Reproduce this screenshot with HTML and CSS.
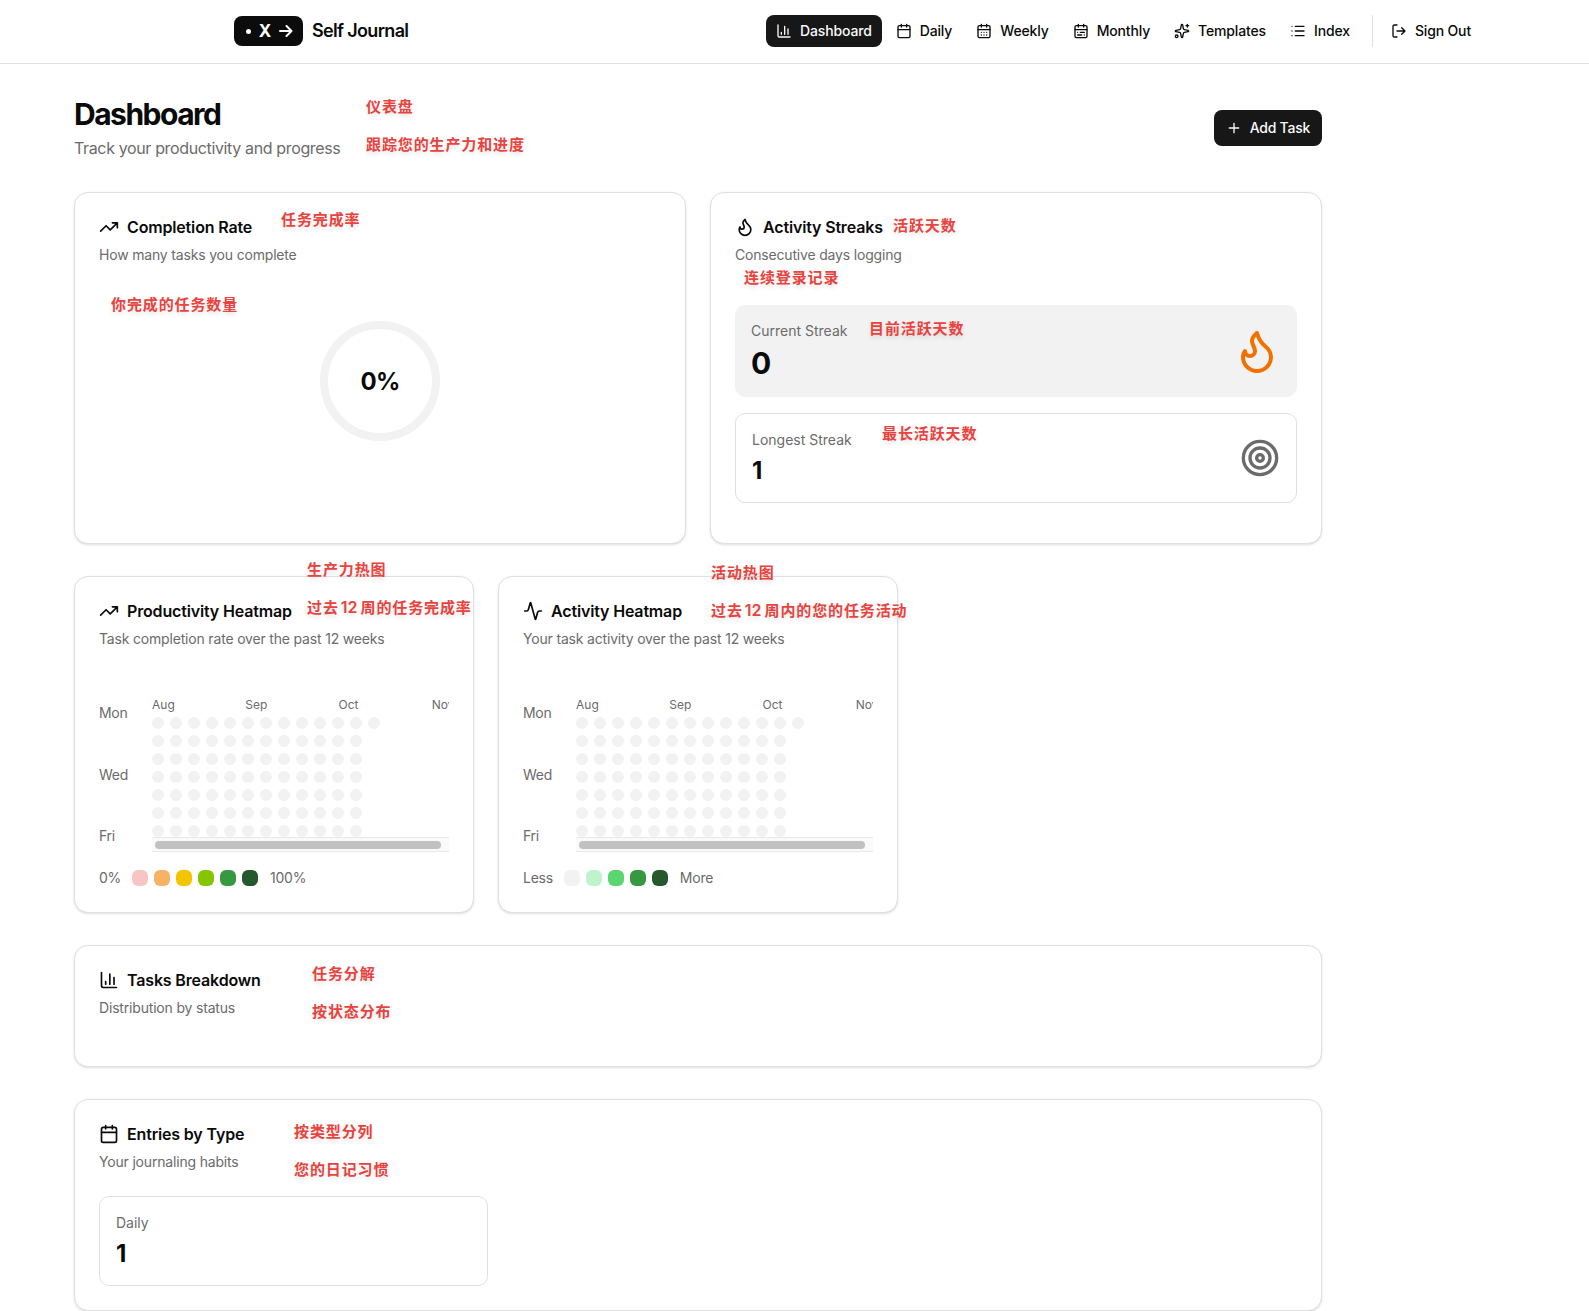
FILE: index.html
```html
<!DOCTYPE html>
<html lang="en">
<head>
    <meta charset="UTF-8">
    <meta name="viewport" content="width=device-width, initial-scale=1.0">
    <title>Self Journal</title>
    <link rel="stylesheet" href="styles.css">
</head>
<body>
    <!-- Icon sprite -->
    <svg class="sprite" width="0" height="0">
        <symbol id="chart" viewBox="0 0 24 24"><path d="M3 3v16a2 2 0 0 0 2 2h16M18 17V9M13 17V5M8 17v-3"/></symbol>
        <symbol id="calendar" viewBox="0 0 24 24"><path d="M8 2v4M16 2v4M3 10h18"/><rect width="18" height="18" x="3" y="4" rx="2"/></symbol>
        <symbol id="calendar-days" viewBox="0 0 24 24"><path d="M8 2v4M16 2v4M3 10h18M8 14h.01M12 14h.01M16 14h.01M8 18h.01M12 18h.01M16 18h.01"/><rect width="18" height="18" x="3" y="4" rx="2"/></symbol>
        <symbol id="calendar-range" viewBox="0 0 24 24"><path d="M8 2v4M16 2v4M3 10h18M17 14h-6M13 18H7M7 14h.01M17 18h.01"/><rect width="18" height="18" x="3" y="4" rx="2"/></symbol>
        <symbol id="sparkles" viewBox="0 0 24 24"><path d="M11.017 2.814a1 1 0 0 1 1.966 0l1.051 5.558a2 2 0 0 0 1.594 1.594l5.558 1.051a1 1 0 0 1 0 1.966l-5.558 1.051a2 2 0 0 0-1.594 1.594l-1.051 5.558a1 1 0 0 1-1.966 0l-1.051-5.558a2 2 0 0 0-1.594-1.594l-5.558-1.051a1 1 0 0 1 0-1.966l5.558-1.051a2 2 0 0 0 1.594-1.594zM20 2v4M22 4h-4"/><circle cx="4" cy="20" r="2"/></symbol>
        <symbol id="list" viewBox="0 0 24 24"><path d="M3 5h.01M3 12h.01M3 19h.01M8 5h13M8 12h13M8 19h13"/></symbol>
        <symbol id="logout" viewBox="0 0 24 24"><path d="m16 17 5-5-5-5M21 12H9M9 21H5a2 2 0 0 1-2-2V5a2 2 0 0 1 2-2h4"/></symbol>
        <symbol id="plus" viewBox="0 0 24 24"><path d="M5 12h14M12 5v14"/></symbol>
        <symbol id="trending" viewBox="0 0 24 24"><path d="M16 7h6v6M22 7l-8.5 8.5-5-5L2 17"/></symbol>
        <symbol id="flame" viewBox="0 0 24 24"><path d="M12 3q1 4 4 6.5t3 5.5a1 1 0 0 1-14 0 5 5 0 0 1 1-3 1 1 0 0 0 5 0c0-2-1.5-3-1.5-5q0-2 2.5-4"/></symbol>
        <symbol id="target" viewBox="0 0 24 24"><circle cx="12" cy="12" r="10"/><circle cx="12" cy="12" r="6"/><circle cx="12" cy="12" r="2"/></symbol>
        <symbol id="activity" viewBox="0 0 24 24"><path d="M22 12h-2.48a2 2 0 0 0-1.93 1.46l-2.35 8.36a.25.25 0 0 1-.48 0L9.24 2.18a.25.25 0 0 0-.48 0l-2.35 8.36A2 2 0 0 1 4.49 12H2"/></symbol>
    </svg>

    <header class="topbar">
        <div class="brand">
            <div class="logo">
                <span class="logo-dot"></span>
                <span class="logo-x">X</span>
                <svg class="logo-arrow" viewBox="0 0 14 12"><path d="M1 6h11.5M7.5 1l5 5-5 5"/></svg>
            </div>
            <span class="brand-name">Self Journal</span>
        </div>
        <nav class="nav">
            <a class="nav-item active"><svg class="icon"><use href="#chart"/></svg><span>Dashboard</span></a>
            <a class="nav-item"><svg class="icon"><use href="#calendar"/></svg><span>Daily</span></a>
            <a class="nav-item"><svg class="icon"><use href="#calendar-days"/></svg><span>Weekly</span></a>
            <a class="nav-item"><svg class="icon"><use href="#calendar-range"/></svg><span>Monthly</span></a>
            <a class="nav-item"><svg class="icon"><use href="#sparkles"/></svg><span>Templates</span></a>
            <a class="nav-item"><svg class="icon"><use href="#list"/></svg><span>Index</span></a>
            <div class="nav-divider"></div>
            <a class="nav-item"><svg class="icon"><use href="#logout"/></svg><span>Sign Out</span></a>
        </nav>
    </header>

    <main class="page">
        <div class="page-head">
            <div>
                <h1>Dashboard</h1>
                <p class="subtitle">Track your productivity and progress</p>
            </div>
            <button class="add-btn"><svg class="icon"><use href="#plus"/></svg><span>Add Task</span></button>
        </div>

        <div class="row two-col">
            <section class="card">
                <h2 class="card-title"><svg class="icon"><use href="#trending"/></svg><span>Completion Rate</span></h2>
                <p class="card-desc">How many tasks you complete</p>
                <div class="ring-wrap">
                    <div class="ring">0%</div>
                </div>
            </section>
            <section class="card">
                <h2 class="card-title"><svg class="icon"><use href="#flame"/></svg><span>Activity Streaks</span></h2>
                <p class="card-desc">Consecutive days logging</p>
                <div class="streaks">
                    <div class="stat stat-current">
                        <div>
                            <div class="stat-label">Current Streak</div>
                            <div class="stat-value big">0</div>
                        </div>
                        <svg class="icon icon-flame"><use href="#flame"/></svg>
                    </div>
                    <div class="stat stat-outline">
                        <div>
                            <div class="stat-label">Longest Streak</div>
                            <div class="stat-value">1</div>
                        </div>
                        <svg class="icon icon-target"><use href="#target"/></svg>
                    </div>
                </div>
            </section>
        </div>

        <div class="row heatmaps">
            <section class="card">
                <h2 class="card-title"><svg class="icon"><use href="#trending"/></svg><span>Productivity Heatmap</span></h2>
                <p class="card-desc">Task completion rate over the past 12 weeks</p>
                <div class="heatmap">
                    <div class="days"><span>Mon</span><span>Wed</span><span>Fri</span></div>
                    <div class="scroller">
                        <div class="months"><span>Aug</span><span>Sep</span><span>Oct</span><span>Nov</span></div>
                        <div class="weeks"></div>
                        <div class="scrollbar"><div class="thumb"></div></div>
                    </div>
                </div>
                <div class="legend">
                    <span class="legend-low">0%</span>
                    <div class="swatches">
                        <i class="sw sw-red"></i><i class="sw sw-orange"></i><i class="sw sw-yellow"></i><i class="sw sw-lime"></i><i class="sw sw-green"></i><i class="sw sw-dark"></i>
                    </div>
                    <span>100%</span>
                </div>
            </section>
            <section class="card">
                <h2 class="card-title"><svg class="icon"><use href="#activity"/></svg><span>Activity Heatmap</span></h2>
                <p class="card-desc">Your task activity over the past 12 weeks</p>
                <div class="heatmap">
                    <div class="days"><span>Mon</span><span>Wed</span><span>Fri</span></div>
                    <div class="scroller">
                        <div class="months"><span>Aug</span><span>Sep</span><span>Oct</span><span>Nov</span></div>
                        <div class="weeks"></div>
                        <div class="scrollbar"><div class="thumb"></div></div>
                    </div>
                </div>
                <div class="legend">
                    <span class="legend-low">Less</span>
                    <div class="swatches">
                        <i class="sw sw-none"></i><i class="sw sw-mint"></i><i class="sw sw-bright"></i><i class="sw sw-green"></i><i class="sw sw-dark"></i>
                    </div>
                    <span>More</span>
                </div>
            </section>
        </div>

        <section class="card row breakdown">
            <h2 class="card-title"><svg class="icon"><use href="#chart"/></svg><span>Tasks Breakdown</span></h2>
            <p class="card-desc">Distribution by status</p>
        </section>

        <section class="card row">
            <h2 class="card-title"><svg class="icon"><use href="#calendar"/></svg><span>Entries by Type</span></h2>
            <p class="card-desc">Your journaling habits</p>
            <div class="entries">
                <div class="stat stat-outline">
                    <div>
                        <div class="stat-label">Daily</div>
                        <div class="stat-value">1</div>
                    </div>
                </div>
            </div>
        </section>
    </main>

    <!-- Translation notes floating over the page -->
    <div class="notes" lang="zh-CN">
        <div class="note n-head">仪表盘<br>跟踪您的生产力和进度</div>
        <div class="note n-rate">任务完成率</div>
        <div class="note n-count">你完成的任务数量</div>
        <div class="note n-streaks">活跃天数</div>
        <div class="note n-logging">连续登录记录</div>
        <div class="note n-current">目前活跃天数</div>
        <div class="note n-longest">最长活跃天数</div>
        <div class="note n-prod">生产力热图<br>过去<b>12</b>周的任务完成率</div>
        <div class="note n-act">活动热图<br>过去<b>12</b>周内的您的任务活动</div>
        <div class="note n-tasks">任务分解<br>按状态分布</div>
        <div class="note n-entries">按类型分列<br>您的日记习惯</div>
    </div>

    <script>
        // 12 full weeks plus the first day of the current one
        document.querySelectorAll('.weeks').forEach(grid => {
            for (let i = 0; i < 12 * 7 + 1; i++) {
                const day = document.createElement('span');
                day.className = 'day';
                grid.appendChild(day);
            }
        });
    </script>
</body>
</html>
```
FILE: styles.css
```css
* {
    box-sizing: border-box;
}

body {
    margin: 0;
    background: #fff;
    color: #0a0a0a;
    font-family: Inter, "Noto Sans CJK SC", sans-serif;
    font-size: 14px;
    line-height: 20px;
    position: relative;
}

h1, h2, p {
    margin: 0;
}

.sprite {
    position: absolute;
}

.icon {
    width: 16px;
    height: 16px;
    flex: none;
    fill: none;
    stroke: currentColor;
    stroke-width: 2;
    stroke-linecap: round;
    stroke-linejoin: round;
}

/* Top bar */
.topbar {
    height: 64px;
    padding: 0 108px 2px 234px;
    border-bottom: 1px solid #e0e0e0;
    display: flex;
    align-items: center;
    justify-content: space-between;
}

.brand {
    display: flex;
    align-items: center;
    gap: 9px;
}

.logo {
    width: 69px;
    height: 30px;
    padding: 0 10px 0 12px;
    border-radius: 8px;
    background: #0c0c0c;
    color: #fff;
    display: flex;
    align-items: center;
    justify-content: space-between;
}

.logo-dot {
    width: 5px;
    height: 5px;
    margin-top: 2px;
    border-radius: 50%;
    background: #fff;
}

.logo-x {
    font-size: 17px;
    font-weight: 700;
}

.logo-arrow {
    width: 14px;
    height: 12px;
    fill: none;
    stroke: #fff;
    stroke-width: 2;
    stroke-linecap: round;
    stroke-linejoin: round;
}

.brand-name {
    font-size: 18px;
    font-weight: 600;
    letter-spacing: -0.67px;
}

.nav {
    display: flex;
    align-items: center;
    gap: 4px;
}

.nav-item {
    height: 32px;
    padding: 0 10px;
    border-radius: 8px;
    display: flex;
    align-items: center;
    gap: 8px;
    font-weight: 500;
    letter-spacing: -0.15px;
}

.nav-item.active {
    background: #171717;
    color: #fafafa;
}

.nav-divider {
    width: 1px;
    height: 32px;
    margin: 0 4px 0 8px;
    background: #e0e0e0;
}

/* Page */
.page {
    width: 1248px;
    margin-left: 74px;
    padding-top: 32px;
}

.page-head {
    display: flex;
    align-items: center;
    justify-content: space-between;
}

h1 {
    font-size: 30px;
    line-height: 36px;
    font-weight: 700;
    letter-spacing: -1.5px;
}

.subtitle {
    margin-top: 4px;
    font-size: 16px;
    line-height: 24px;
    letter-spacing: -0.36px;
    color: #6b6b6b;
}

.add-btn {
    height: 36px;
    padding: 0 12px;
    border: 0;
    border-radius: 8px;
    background: #171717;
    color: #fafafa;
    display: flex;
    align-items: center;
    gap: 8px;
    font: 500 14px/20px Inter, sans-serif;
    letter-spacing: -0.25px;
}

.row {
    margin-top: 32px;
}

.two-col {
    display: grid;
    grid-template-columns: 1fr 1fr;
    gap: 24px;
}

.card {
    padding: 24px;
    border: 1px solid #e0e0e0;
    border-radius: 14px;
    background: #fff;
    box-shadow: 0 1px 3px rgba(0, 0, 0, 0.1), 0 1px 2px -1px rgba(0, 0, 0, 0.1);
}

.card-title {
    display: flex;
    align-items: center;
    gap: 8px;
    font-size: 16px;
    line-height: 20px;
    font-weight: 600;
    letter-spacing: -0.16px;
}

.card-title .icon {
    width: 20px;
    height: 20px;
}

.card-desc {
    margin-top: 8px;
    color: #6b6b6b;
    letter-spacing: -0.18px;
}

.ring-wrap {
    height: 230px;
    margin-top: 24px;
    padding-top: 32px;
    display: flex;
    justify-content: center;
}

.ring {
    width: 120px;
    height: 120px;
    padding-top: 2px;
    border: 8px solid #f2f2f2;
    border-radius: 50%;
    display: flex;
    align-items: center;
    justify-content: center;
    font-size: 24px;
    font-weight: 700;
    letter-spacing: -0.9px;
}

.streaks {
    margin-top: 24px;
    padding: 16px 0;
    display: flex;
    flex-direction: column;
    gap: 16px;
}

.stat {
    padding: 16px;
    border-radius: 10px;
    display: flex;
    align-items: center;
    justify-content: space-between;
}

.stat-current {
    background: #f2f2f2;
}

.stat-outline {
    border: 1px solid #e0e0e0;
}

.stat-label {
    color: #6b6b6b;
}

.stat-value {
    margin-top: 4px;
    padding-top: 2px;
    font-size: 24px;
    line-height: 30px;
    font-weight: 700;
}

.stat-value.big {
    padding-top: 0;
    font-size: 30px;
    line-height: 36px;
}

.icon-flame {
    width: 48px;
    height: 48px;
    color: #f07000;
}

.icon-target {
    width: 40px;
    height: 40px;
    color: #6b6b6b;
}

/* Heatmaps */
.heatmaps {
    display: flex;
    gap: 24px;
}

.heatmaps .card {
    width: 400px;
}

.heatmap {
    margin-top: 48px;
    display: flex;
    justify-content: space-between;
}

.days {
    height: 155px;
    padding: 6px 0;
    display: flex;
    flex-direction: column;
    justify-content: space-between;
    color: #6b6b6b;
    letter-spacing: -0.3px;
}

.scroller {
    width: 297px;
    overflow: hidden;
}

.months {
    width: 373px;
    display: grid;
    grid-template-columns: repeat(4, 1fr);
    font-size: 12px;
    line-height: 16px;
    color: #6b6b6b;
}

.weeks {
    margin-top: 4px;
    display: grid;
    grid-template-rows: repeat(7, 12px);
    grid-auto-flow: column;
    grid-auto-columns: 12px;
    gap: 6px;
}

.day {
    border-radius: 50%;
    background: #f2f2f2;
}

.scrollbar {
    height: 15px;
    padding: 3px 8px 3px 3px;
    border: 1px solid #e8e8e8;
    border-width: 1px 0;
    background: #fafafa;
}

.thumb {
    height: 8px;
    border-radius: 4px;
    background: #c1c1c1;
}

.legend {
    margin-top: 16px;
    display: flex;
    align-items: center;
    gap: 12px;
    color: #6b6b6b;
    letter-spacing: -0.25px;
}

.legend-low {
    margin-right: -1px;
}

.swatches {
    display: flex;
    gap: 6px;
}

.sw {
    width: 16px;
    height: 16px;
    border-radius: 6px;
}

.sw-red { background: #f6c6c5; }
.sw-orange { background: #f7b266; }
.sw-yellow { background: #f5c400; }
.sw-lime { background: #86c600; }
.sw-green { background: #37993f; }
.sw-dark { background: #25592d; }
.sw-none { background: #f2f2f2; }
.sw-mint { background: #bff3cb; }
.sw-bright { background: #5ad66f; }

.breakdown {
    padding-bottom: 48px;
}

.entries {
    margin-top: 24px;
    display: grid;
    grid-template-columns: repeat(3, 1fr);
    gap: 16px;
}

/* Notes */
.note {
    position: absolute;
    white-space: nowrap;
    font-family: "Noto Sans CJK SC", sans-serif;
    font-size: 15px;
    line-height: 38px;
    font-weight: 700;
    letter-spacing: 0.88px;
    color: #e8433e;
    text-shadow: 0 3px 4px rgba(0, 0, 0, 0.1);
}

.note b {
    margin: 0 3px 0 2px;
    font-family: Inter, sans-serif;
    font-weight: 600;
    font-size: 16px;
    line-height: 1;
    letter-spacing: 0;
}

.n-head { left: 366px; top: 87px; }
.n-rate { left: 281px; top: 200px; }
.n-count { left: 111px; top: 285px; }
.n-streaks { left: 893px; top: 206px; }
.n-logging { left: 744px; top: 258px; }
.n-current { left: 869px; top: 309px; }
.n-longest { left: 882px; top: 414px; }
.n-prod { left: 307px; top: 550px; }
.n-act { left: 711px; top: 553px; }
.n-tasks { left: 312px; top: 954px; }
.n-entries { left: 294px; top: 1112px; }
```
